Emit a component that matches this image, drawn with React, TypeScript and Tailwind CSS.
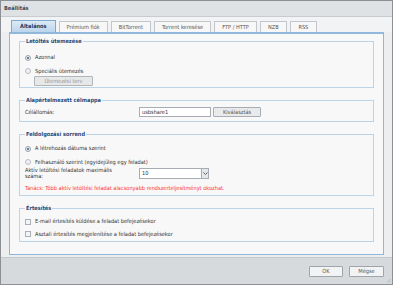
export default function App() {
  const tabs = ["Általános", "Prémium fiók", "BitTorrent", "Torrent keresése", "FTP / HTTP", "NZB", "RSS"];
  return (
    <div className="w-[400px] h-[286px] bg-white text-[5.6px] text-[#333]" style={{ fontFamily: "'DejaVu Sans Condensed', 'DejaVu Sans', Verdana, sans-serif" }}>
      <div className="w-[393px] h-[285px] border border-[#8c8f93] bg-[#eceef0] flex flex-col">
        {/* Címsor */}
        <div className="h-[16px] bg-[#dfe2e5] border-b border-[#c8ccd0] flex items-center pl-[3px] font-bold text-[#3c4a5c]">
          Beállítás
        </div>

        {/* Fülek */}
        <div className="h-[15px] flex items-end gap-[3px] pl-[10px] bg-[#f2f3f4]">
          {tabs.map((t, i) => (
            <div
              key={t}
              className={
                i === 0
                  ? "h-[12px] px-[8px] flex items-center border border-b-0 border-[#7fa9cf] bg-gradient-to-b from-[#dceaf6] to-[#bcd5ec] font-bold text-[#1e3a5c] rounded-t-[1px]"
                  : "h-[11px] px-[7px] min-w-[27px] flex items-center justify-center border border-b-0 border-[#c3c7cc] bg-[#f7f7f7] text-[#555]"
              }
            >
              {t}
            </div>
          ))}
        </div>

        {/* Tartalom */}
        <div className="mx-[8px] h-[223px] border border-[#8fb8dc] border-t-2 bg-[#f8f8f8] px-[9px] pt-[3px] flex flex-col gap-[8px]">
          {/* Letöltés ütemezése */}
          <fieldset className="border border-[#bcd4e8] px-[5px] pb-[6px] h-[51px]">
            <legend className="px-[1px] font-bold text-[#1f4a7a]">Letöltés ütemezése</legend>
            <div className="flex flex-col gap-[5px] pt-[8px]">
              <label className="flex items-center gap-[4px]">
                <span className="w-[6px] h-[6px] rounded-full border border-[#9aa3ab] bg-[#e8ecf0] flex items-center justify-center">
                  <span className="w-[2px] h-[2px] rounded-full bg-[#3a5f86]" />
                </span>
                Azonnal
              </label>
              <label className="flex items-center gap-[4px]">
                <span className="w-[6px] h-[6px] rounded-full border border-[#b8bfc6] bg-[#eef0f2]" />
                Speciális ütemezés
              </label>
            </div>
            <div className="mt-[1px] ml-[9px] w-[59px] h-[10px] border border-[#b0b5ba] bg-[#e6e8ea] text-[#999] flex items-center justify-center rounded-[1px]">
              Ütemezési terv
            </div>
          </fieldset>

          {/* Alapértelmezett célmappa */}
          <fieldset className="border border-[#bcd4e8] px-[5px] h-[26px]">
            <legend className="px-[1px] font-bold text-[#1f4a7a]">Alapértelmezett célmappa</legend>
            <div className="flex items-center pt-[3px]">
              <span className="w-[114px]">Célállomás:</span>
              <div className="w-[72px] h-[10px] border border-[#a7adb3] bg-white flex items-center pl-[2px]">usbshare1</div>
              <div className="ml-[2px] w-[48px] h-[10px] border border-[#a7adb3] bg-[#e8eaec] flex items-center justify-center text-[#555] rounded-[1px]">
                Kiválasztás
              </div>
            </div>
          </fieldset>

          {/* Feldolgozási sorrend */}
          <fieldset className="border border-[#bcd4e8] px-[5px] h-[66px]">
            <legend className="px-[1px] font-bold text-[#1f4a7a]">Feldolgozási sorrend</legend>
            <div className="flex flex-col gap-[5px] pt-[6px]">
              <label className="flex items-center gap-[4px]">
                <span className="w-[6px] h-[6px] rounded-full border border-[#9aa3ab] bg-[#e8ecf0] flex items-center justify-center">
                  <span className="w-[2px] h-[2px] rounded-full bg-[#3a5f86]" />
                </span>
                A létrehozás dátuma szerint
              </label>
              <label className="flex items-center gap-[4px]">
                <span className="w-[6px] h-[6px] rounded-full border border-[#b8bfc6] bg-[#eef0f2]" />
                Felhasználó szerint (egyidejűleg egy feladat)
              </label>
            </div>
            <div className="flex items-center mt-[1px]">
              <span className="w-[98px] mr-[16px] leading-[6px]">Aktív letöltési feladatok maximális száma:</span>
              <div className="w-[70px] h-[11px] border border-[#a7adb3] bg-white flex items-center pl-[2px] justify-between">
                10
                <span className="w-[7px] h-full border-l border-[#a7adb3] bg-[#e4e7ea] flex items-center justify-center">
                  <svg width="5" height="3" viewBox="0 0 5 3"><path d="M0.5 0.5 L2.5 2.5 L4.5 0.5" stroke="#555" strokeWidth="0.9" fill="none" /></svg>
                </span>
              </div>
            </div>
            <div className="mt-[5px] text-[#ff3434]">
              Tanács: Több aktív letöltési feladat alacsonyabb rendszerteljesítményt okozhat.
            </div>
          </fieldset>

          {/* Értesítés */}
          <fieldset className="border border-[#bcd4e8] px-[5px] h-[38px]">
            <legend className="px-[1px] font-bold text-[#1f4a7a]">Értesítés</legend>
            <div className="flex flex-col gap-[4px] pt-[5px]">
              <label className="flex items-center gap-[4px]">
                <span className="w-[6px] h-[6px] border border-[#a9b0b7] bg-[#f2f3f4]" />
                E-mail értesítés küldése a feladat befejezésekor
              </label>
              <label className="flex items-center gap-[4px]">
                <span className="w-[6px] h-[6px] border border-[#a9b0b7] bg-[#f2f3f4]" />
                Asztali értesítés megjelenítése a feladat befejezésekor
              </label>
            </div>
          </fieldset>
        </div>

        {/* Lábléc */}
        <div className="relative flex-1 mt-[2px] bg-[#d6dadd] border-t border-[#c5c9cd] flex items-center justify-end gap-[6px] pr-[8px]">
          <div className="w-[34px] h-[11px] border border-[#9ea4aa] bg-[#f2f3f4] flex items-center justify-center text-[#555] rounded-[1px]">OK</div>
          <div className="w-[35px] h-[11px] border border-[#9ea4aa] bg-[#f2f3f4] flex items-center justify-center text-[#555] rounded-[1px]">Mégse</div>
          <svg className="absolute right-[1px] bottom-[1px]" width="5" height="5" viewBox="0 0 5 5">
            <path d="M4.5 1 L1 4.5 M4.5 3 L3 4.5" stroke="#9ea4aa" strokeWidth="0.6" />
          </svg>
        </div>
      </div>
    </div>
  );
}
